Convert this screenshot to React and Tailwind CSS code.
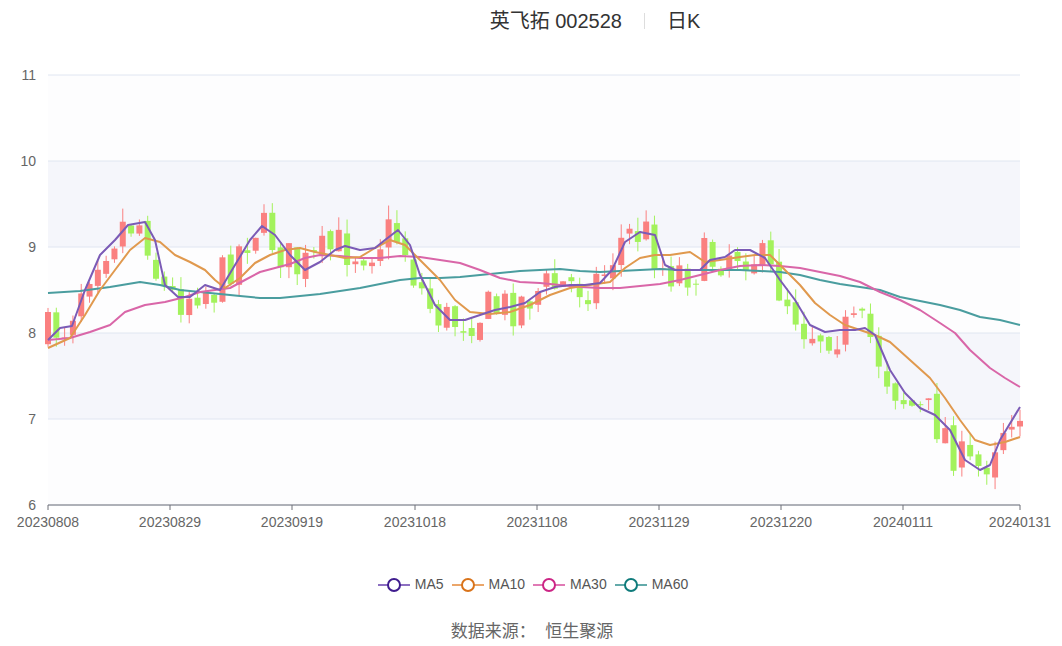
import React from "react";

const MA5=[[48,340],[60,328],[72,326],[85,290],[100,255],[115,240],[128,225],[145,222],[155,240],[165,285],[178,297],[190,297],[205,285],[220,290],[235,265],[250,240],[262,226],[275,235],[290,255],[305,270],[320,262],[335,250],[345,246],[360,250],[375,248],[385,240],[398,230],[410,245],[420,275],[435,305],[450,320],[465,320],[480,315],[495,310],[510,307],[525,303],[540,292],[555,287],[570,285],[585,285],[600,283],[612,270],[625,242],[640,232],[655,235],[665,265],[675,270],[690,270],[700,270],[710,260],[725,257],[735,250],[750,250],[765,258],[780,280],[795,300],[810,325],[825,332],[840,330],[855,330],[865,328],[875,335],[890,370],[905,393],[920,408],[935,415],[950,430],[965,460],[980,470],[990,465],[1000,440],[1020,407]];
const MA10=[[48,348],[70,338],[85,315],[100,290],[115,270],[130,250],[145,238],[160,242],[175,255],[190,262],[205,270],[215,280],[225,288],[240,278],[255,263],[270,255],[285,250],[300,248],[315,252],[330,255],[345,258],[360,257],[375,248],[390,240],[405,245],[420,260],[440,280],[455,300],[470,312],[490,314],[510,312],[530,305],[550,295],[570,288],[590,285],[610,282],[625,268],[640,258],[655,255],[670,255],[690,252],[705,262],[720,260],[740,257],[755,255],[770,255],[785,270],[800,285],[815,303],[830,315],[845,325],[860,330],[875,335],[890,342],[910,360],[930,378],[945,398],[960,420],[975,440],[990,445],[1005,442],[1020,437]];
const MA30=[[48,340],[70,338],[90,332],[110,325],[125,312],[145,305],[165,302],[185,297],[200,292],[215,290],[230,288],[245,280],[260,272],[275,268],[290,264],[305,258],[320,255],[340,256],[360,258],[380,258],[400,256],[420,257],[440,260],[460,263],[480,270],[500,278],[520,282],[540,283],[560,285],[580,287],[600,288],[620,288],[640,286],[660,284],[680,280],[700,275],[720,270],[740,266],[760,265],[780,266],[800,268],[820,272],[840,276],[860,282],[880,292],[900,300],[920,310],[940,323],[955,333],[970,350],[990,368],[1005,378],[1020,387]];
const MA60=[[48,293],[80,291],[110,287],[140,282],[160,285],[180,290],[200,292],[220,294],[240,296],[260,298],[280,298],[300,296],[320,294],[340,291],[360,288],[380,284],[400,280],[420,278],[440,278],[460,277],[480,275],[500,273],[520,271],[540,270],[560,269],[580,271],[600,272],[620,271],[640,270],[660,269],[680,270],[700,270],[720,270],[740,270],[760,271],[780,272],[800,275],[820,280],[840,284],[860,287],[880,290],[900,297],[920,301],[940,305],[960,310],[980,317],[1000,320],[1020,325]];

function interp(pts,x){for(let i=1;i<pts.length;i++){if(x<=pts[i][0]){const [x0,y0]=pts[i-1],[x1,y1]=pts[i];return y0+(y1-y0)*(x-x0)/(x1-x0);}}return pts[pts.length-1][1];}
let seed=7;const rnd=()=>{seed=(seed*16807)%2147483647;return seed/2147483647;};
const N=118;const candles=[];
let prev=interp(MA5,48);
for(let i=0;i<N;i++){const x=48+i*(972/(N-1));const base=interp(MA5,Math.min(1020,x+6));const c=base+(rnd()-0.5)*44;const o=prev+(rnd()-0.5)*10;const hi=Math.min(o,c)-rnd()*14;const lo=Math.max(o,c)+rnd()*12;candles.push({x,o,c,hi,lo});prev=c;}
const pl=p=>p.map(q=>q.join(",")).join(" ");
const xl=[["20230808",48],["20230829",170],["20230919",292],["20231018",415],["20231108",537],["20231129",659],["20231220",781],["20240111",903],["20240131",1020]];

export default function App(){
  return(
    <div className="w-[1062px] h-[646px] bg-white relative" style={{fontFamily:'"Liberation Sans","Noto Sans CJK SC",sans-serif'}}>
      <div className="h-[40px] flex items-center justify-center pl-[128px] pt-[2px] text-[20px] text-[#333]">
        <span>英飞拓 002528</span><span className="mx-[22px] w-px h-[16px] bg-[#ddd]"></span><span>日K</span>
      </div>
      <svg width="1062" height="510" viewBox="0 40 1062 510" className="block">
        <rect x="48" y="75" width="972" height="86" fill="#fdfdfe"/>
        <rect x="48" y="161" width="972" height="86" fill="#f5f6fb"/>
        <rect x="48" y="247" width="972" height="86" fill="#fdfdfe"/>
        <rect x="48" y="333" width="972" height="86" fill="#f5f6fb"/>
        <rect x="48" y="419" width="972" height="86" fill="#fdfdfe"/>
        {[11,10,9,8,7,6].map((v,i)=>(<g key={v}>
          <line x1="48" x2="1020" y1={75+i*86} y2={75+i*86} stroke="#e0e6f1"/>
          <text x="36" y={80+i*86} textAnchor="end" fontSize="14" fill="#666">{v}</text></g>))}
        <line x1="48" x2="1020" y1="505" y2="505" stroke="#6e7079"/>
        {xl.map(([t,x])=>(<g key={t}><line x1={x} x2={x} y1="505" y2="510" stroke="#6e7079"/>
          <text x={x} y="527" textAnchor="middle" fontSize="14" fill="#666">{t}</text></g>))}
        {candles.map((k,i)=>{const up=k.c<k.o;const col=up?"#fa8080":"#a3f25c";return(<g key={i}>
          <line x1={k.x} x2={k.x} y1={k.hi} y2={k.lo} stroke={col}/>
          <rect x={k.x-3} y={Math.min(k.o,k.c)} width="6" height={Math.max(1,Math.abs(k.o-k.c))} fill={col}/></g>);})}
        <polyline points={pl(MA60)} fill="none" stroke="#4a9d9f" strokeWidth="2" strokeLinejoin="round"/>
        <polyline points={pl(MA30)} fill="none" stroke="#d966a8" strokeWidth="2" strokeLinejoin="round"/>
        <polyline points={pl(MA10)} fill="none" stroke="#e0994e" strokeWidth="2" strokeLinejoin="round"/>
        <polyline points={pl(MA5)} fill="none" stroke="#7b5bb6" strokeWidth="2" strokeLinejoin="round"/>
      </svg>
      <div className="flex justify-center gap-[8px] pl-[4px] mt-[24px] text-[14px] text-[#555]">
        {[["MA5","#3f1c8e","#8c6fc1"],["MA10","#d9731a","#eba66a"],["MA30","#cc2585","#e07ab5"],["MA60","#0f7b7b","#63aaaa"]].map(([n,c,l])=>(
          <div key={n} className="flex items-center gap-[5px]">
            <svg width="32" height="16"><line x1="0" x2="32" y1="8" y2="8" stroke={l} strokeWidth="2"/><circle cx="16" cy="8" r="6" fill="white" stroke={c} strokeWidth="2"/></svg>
            <span>{n}</span></div>))}
      </div>
      <div className="text-center mt-[24px] text-[17px] text-[#666] pl-[2px]">数据来源：&nbsp;&nbsp;恒生聚源</div>
    </div>
  );
}
